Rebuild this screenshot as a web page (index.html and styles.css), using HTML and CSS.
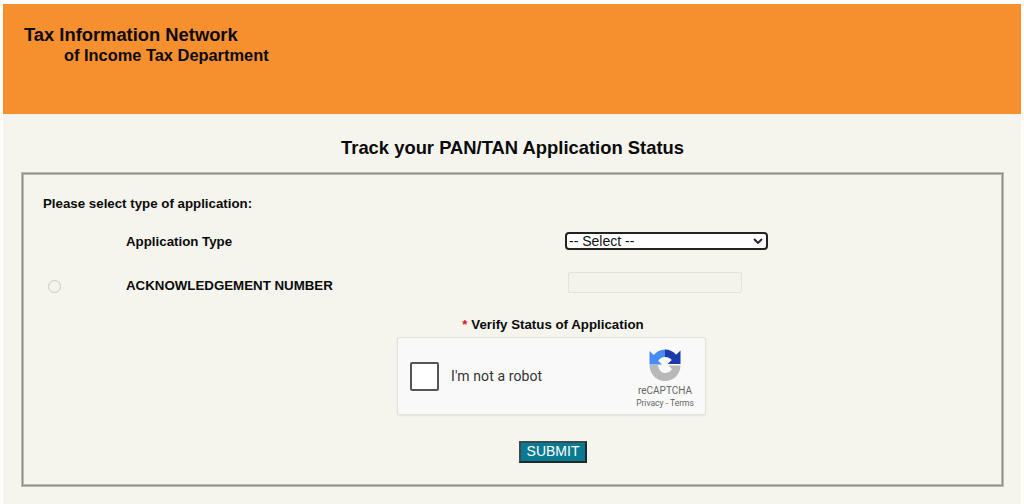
FILE: index.html
```html
<!DOCTYPE html>
<html lang="en">
<head>
<meta charset="utf-8">
<title>Track your PAN/TAN Application Status</title>
<link rel="stylesheet" href="styles.css">
</head>
<body>
<div class="page">
  <header class="banner">
    <div class="brand-main">Tax Information Network</div>
    <div class="brand-sub">of Income Tax Department</div>
  </header>
  <main class="content">
    <h1 class="title">Track your PAN/TAN Application Status</h1>
    <form class="panel">
      <div class="prompt">Please select type of application:</div>
      <div class="row row-type">
        <div class="radio-cell"></div>
        <label class="row-label">Application Type</label>
        <div class="field-cell">
          <div class="select-wrap">
            <select class="type-select"><option>-- Select --</option></select>
            <svg class="chevron" viewBox="0 0 10 6" width="10" height="6" aria-hidden="true">
              <path d="M1 1 L5 5 L9 1" fill="none" stroke="#222" stroke-width="1.800"/>
            </svg>
          </div>
        </div>
      </div>
      <div class="row row-ack">
        <div class="radio-cell"><span class="radio"></span></div>
        <label class="row-label">ACKNOWLEDGEMENT NUMBER</label>
        <div class="field-cell"><div class="ack-input"></div></div>
      </div>
      <div class="verify"><span class="req">*</span> Verify Status of Application</div>
      <div class="captcha">
        <span class="check"></span>
        <span class="robot">I'm not a robot</span>
        <div class="cap-brand">
          <svg class="cap-logo" viewBox="0 0 32 32" width="32" height="32" aria-hidden="true">
            <path fill="#b8b8b8" d="M0.500 16 H9 C9.500 20.500 12.500 24 16 24 C19 24 21.500 22.500 23 20 L19.500 16.500 H31.500 C31.500 25.500 24.500 32 16 32 C7.500 32 0.500 25 0.500 16 Z"/>
            <path fill="#4a8af4" d="M0.500 2 L4.800 6 C7.500 2.800 11.500 0.500 16 0.500 V8 C13 8 10.700 9.500 9.200 12 L13 15.500 H0.500 Z"/>
            <path fill="#1c3aa9" d="M16 0.500 C20.500 0.500 24.500 2.500 27.200 5.800 L31.500 1.500 V15 H18.500 L22.800 11 C21 9 19 8 16 8 Z"/>
          </svg>
          <div class="cap-name">reCAPTCHA</div>
          <div class="cap-links">Privacy - Terms</div>
        </div>
      </div>
      <div class="actions"><button type="button" class="submit">SUBMIT</button></div>
    </form>
  </main>
</div>
</body>
</html>
```
FILE: styles.css
```css
html, body {
  margin: 0;
  height: 100%;
  background: #fdfdfb;
}
body {
  font-family: "Liberation Sans", Arial, sans-serif;
  color: #0b0b0b;
  overflow: hidden;
}
.page {
  box-sizing: border-box;
  height: 504px;
  padding: 4px 3px 0;
  display: flex;
  flex-direction: column;
}
.banner {
  box-sizing: border-box;
  height: 110px;
  flex: none;
  background: #f68f2e;
  padding: 20px 0 0 21px;
  font-weight: bold;
}
.brand-main {
  font-size: 18.350px;
  line-height: 21px;
}
.brand-sub {
  font-size: 16.400px;
  line-height: 20px;
  margin-left: 40px;
}
.content {
  flex: 1;
  background: #f5f5ee;
  padding: 23px 17px 0 18px;
}
.title {
  margin: 0 0 13px;
  font-size: 18.400px;
  line-height: 22px;
  font-weight: bold;
  text-align: center;
}
.panel {
  box-sizing: border-box;
  height: 315px;
  border: 3px solid #bcbcb4;
  outline: 1px solid #8e8e86;
  outline-offset: -2px;
  padding: 21px 0 0 19px;
  font-size: 13.300px;
  font-weight: bold;
}
.prompt {
  line-height: 16px;
}
.row {
  display: flex;
  align-items: center;
}
.row-type {
  margin-top: 20px;
  height: 18px;
}
.row-ack {
  margin-top: 24px;
  height: 22px;
}
.radio-cell {
  width: 83px;
  flex: none;
  padding-left: 5px;
  box-sizing: border-box;
  display: flex;
  align-items: center;
}
.radio {
  display: block;
  width: 11px;
  height: 11px;
  border: 1px solid #c9c9c2;
  border-radius: 50%;
  background: #f4f4ee;
  margin-top: 3px;
}
.row-label {
  width: 439px;
  flex: none;
}
.field-cell {
  flex: none;
}
.select-wrap {
  position: relative;
  width: 203px;
  height: 18px;
}
.type-select {
  display: block;
  appearance: none;
  width: 203px;
  height: 18px;
  box-sizing: border-box;
  margin: 0;
  padding: 0 0 0 2px;
  border: 2px solid #222;
  border-radius: 4px;
  background: #fff;
  font-family: "Liberation Sans", Arial, sans-serif;
  font-size: 14px;
  line-height: 13px;
  color: #111;
}
.chevron {
  position: absolute;
  right: 5px;
  top: 6px;
  pointer-events: none;
}
.ack-input {
  width: 172px;
  height: 19px;
  margin: -6px 0 0 3px;
  border: 1px solid #e3e3dc;
  border-radius: 2px;
  background: #f3f3ec;
}
.verify {
  margin-top: 21px;
  line-height: 16px;
  text-align: center;
  padding-left: 82px;
  margin-left: -20px;
}
.req {
  color: #e01a1a;
}
.captcha {
  box-sizing: border-box;
  width: 309px;
  height: 78px;
  margin: 4px 0 0 354px;
  display: flex;
  align-items: center;
  background: #f9f9f9;
  border: 1px solid #e2e2e0;
  border-radius: 3px;
  box-shadow: 0 1px 2px rgba(0, 0, 0, .08);
  font-family: Roboto, "Liberation Sans", Arial, sans-serif;
  font-weight: normal;
}
.check {
  box-sizing: border-box;
  width: 29px;
  height: 29px;
  margin-left: 12px;
  background: #fff;
  border: 2px solid #555;
  border-radius: 2px;
  flex: none;
}
.robot {
  margin-left: 12px;
  font-size: 14px;
  color: #333;
  letter-spacing: .1px;
}
.cap-brand {
  margin-left: auto;
  width: 70px;
  margin-right: 5px;
  align-self: flex-start;
  padding-top: 11px;
  display: flex;
  flex-direction: column;
  align-items: center;
  color: #666;
}
.cap-logo {
  display: block;
}
.cap-name {
  font-size: 10px;
  line-height: 12px;
  margin-top: 4px;
}
.cap-links {
  font-size: 8.500px;
  line-height: 10px;
  margin-top: 1px;
  white-space: nowrap;
}
.actions {
  margin-top: 26px;
  margin-left: -20px;
  padding-left: 82px;
  display: flex;
  justify-content: center;
}
.submit {
  box-sizing: border-box;
  width: 68px;
  height: 22px;
  padding: 0 0 2px;
  background: #0a7a92;
  border: 2px solid;
  border-color: #3a4a4f #20282a #20282a #3a4a4f;
  color: #fff;
  font-family: "Liberation Sans", Arial, sans-serif;
  font-size: 14px;
  line-height: 16px;
}
```
